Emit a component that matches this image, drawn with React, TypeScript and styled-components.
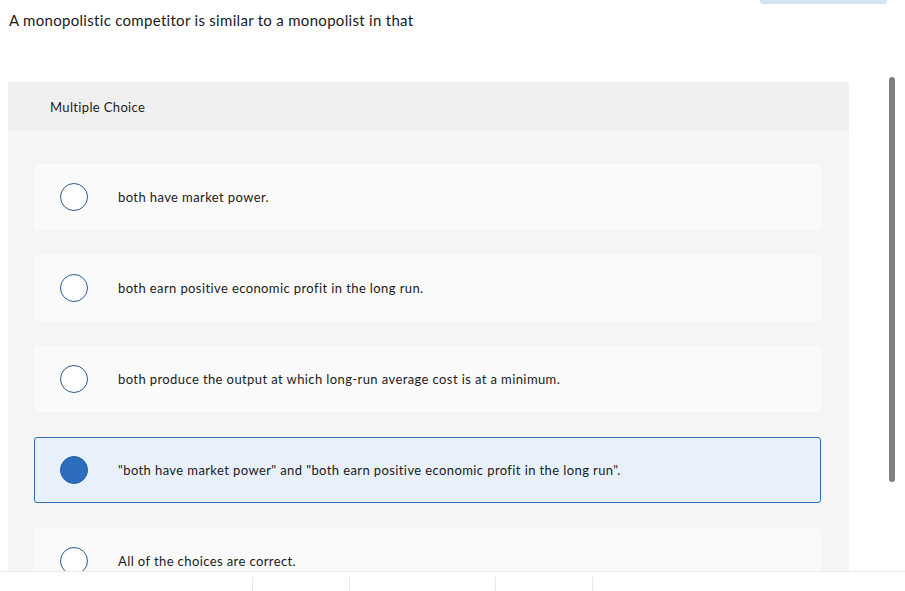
import styled, { createGlobalStyle } from "styled-components";

const GlobalStyle = createGlobalStyle`
  html, body {
    margin: 0;
    padding: 0;
    background: #ffffff;
    overflow: hidden;
  }
  body {
    font-family: Lato, "Open Sans", Arial, sans-serif;
    color: #1d1d1d;
  }
`;

const Page = styled.div`
  width: 905px;
  height: 591px;
  display: flex;
  flex-direction: column;
  position: relative;
  overflow: hidden;
`;

const Viewport = styled.div`
  height: 571px;
  overflow: hidden;
  flex-shrink: 0;
`;

const TopStrip = styled.div`
  display: flex;
  justify-content: flex-end;
  height: 4px;
  padding-right: 18px;
`;

const TopTab = styled.div`
  width: 127px;
  height: 4px;
  background: #d6e3f3;
  border-radius: 0 0 3px 3px;
`;

const Question = styled.p`
  margin: 0;
  padding: 6px 0 0 9px;
  font-size: 15px;
  line-height: 20px;
  letter-spacing: 0.3px;
  color: #1a1a1a;
`;

const Panel = styled.section`
  margin: 52px 0 0 8px;
  width: 841px;
  background: #f5f5f5;
  border-radius: 3px 3px 0 0;
  padding-bottom: 40px;
`;

const PanelHeader = styled.div`
  height: 49px;
  display: flex;
  align-items: center;
  padding-left: 42px;
  background: #efefef;
  border-radius: 3px 3px 0 0;
  font-size: 13px;
  letter-spacing: 0.35px;
  color: #1d1d1d;
`;

const ChoiceList = styled.div`
  display: flex;
  flex-direction: column;
  gap: 25px;
  padding: 33px 28px 0 26px;
`;

const Choice = styled.label<{ selected?: boolean }>`
  height: 66px;
  box-sizing: border-box;
  display: flex;
  align-items: center;
  padding-left: 25px;
  border-radius: 3px;
  background: ${p => (p.selected ? "#e8f1fb" : "#fafafa")};
  border: 1px solid ${p => (p.selected ? "#2f6db5" : "#fafafa")};
  cursor: pointer;
`;

const Radio = styled.span<{ selected?: boolean }>`
  width: 28px;
  height: 28px;
  box-sizing: border-box;
  border-radius: 50%;
  flex-shrink: 0;
  border: 1.5px solid ${p => (p.selected ? "#235da0" : "#285b92")};
  background: ${p => (p.selected ? "#2c6ebd" : "#ffffff")};
`;

const ChoiceText = styled.span`
  margin-left: 30px;
  font-size: 13px;
  letter-spacing: 0.4px;
  color: #1a1a1a;
`;

const ScrollThumb = styled.div`
  position: absolute;
  left: 889px;
  top: 77px;
  width: 6px;
  height: 405px;
  border-radius: 3px;
  background: #808080;
`;

const Footer = styled.footer`
  flex: 1;
  display: flex;
  border-top: 1px solid #ececec;
  background: #ffffff;
`;

const FooterCell = styled.div<{ w: number; divider?: boolean }>`
  width: ${p => p.w}px;
  margin-top: 5px;
  border-left: ${p => (p.divider ? "1px solid #e8e8e8" : "none")};
`;

const choices = [
  "both have market power.",
  "both earn positive economic profit in the long run.",
  "both produce the output at which long-run average cost is at a minimum.",
  "\"both have market power\" and \"both earn positive economic profit in the long run\".",
  "All of the choices are correct.",
];

export default function App() {
  const selected = 3;

  return (
    <>
      <GlobalStyle />
      <Page>
        <Viewport>
          <TopStrip>
            <TopTab />
          </TopStrip>
          <Question>A monopolistic competitor is similar to a monopolist in that</Question>
          <Panel>
            <PanelHeader>Multiple Choice</PanelHeader>
            <ChoiceList>
              {choices.map((text, i) => (
                <Choice key={i} selected={i === selected}>
                  <Radio selected={i === selected} />
                  <ChoiceText>{text}</ChoiceText>
                </Choice>
              ))}
            </ChoiceList>
          </Panel>
        </Viewport>
        <Footer>
          <FooterCell w={253} />
          <FooterCell w={97} divider />
          <FooterCell w={145} divider />
          <FooterCell w={97} divider />
          <FooterCell w={313} divider />
        </Footer>
        <ScrollThumb />
      </Page>
    </>
  );
}
